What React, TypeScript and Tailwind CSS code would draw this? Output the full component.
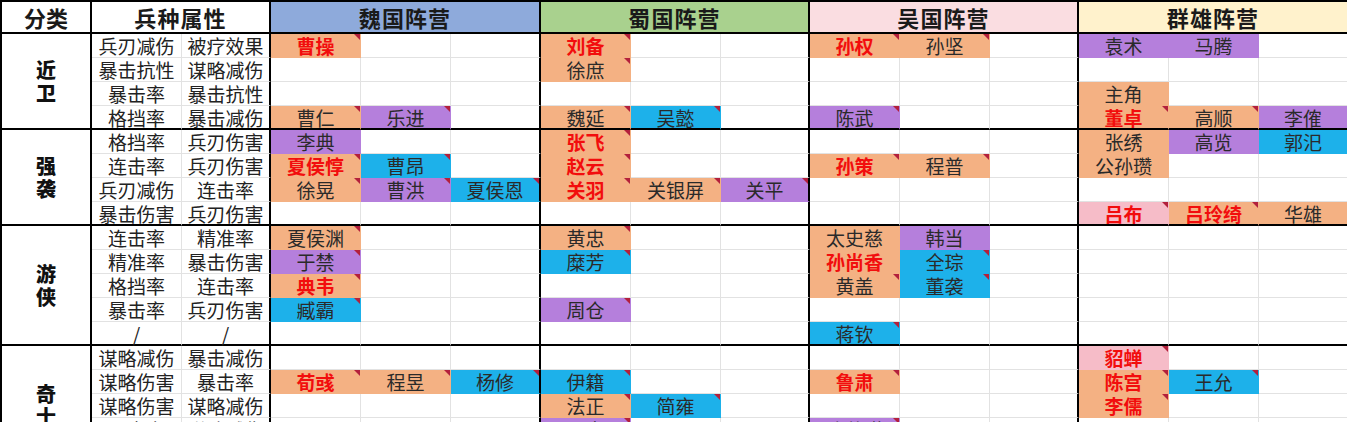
type Fill = 'o' | 'p' | 'b' | 'k'
type Hero = [string, Fill, boolean?, boolean?] | null

const fillClass: Record<Fill, string> = {
  o: 'bg-[#f4b183] border-[#f4b183]',
  p: 'bg-[#b57fdc] border-[#b57fdc]',
  b: 'bg-[#1db1ea] border-[#1db1ea]',
  k: 'bg-[#f6bcc8] border-[#f6bcc8]',
}

const camps = [
  { name: '魏国阵营', bg: 'bg-[#8eaadb]' },
  { name: '蜀国阵营', bg: 'bg-[#a9d18e]' },
  { name: '吴国阵营', bg: 'bg-[#fadde1]' },
  { name: '群雄阵营', bg: 'bg-[#fff2cc]' },
]

const groups = [
  { label: '近卫', rows: 4 },
  { label: '强袭', rows: 4 },
  { label: '游侠', rows: 5 },
  { label: '奇士', rows: 5 },
]

const attrs: [string, string][] = [
  ['兵刃减伤', '被疗效果'],
  ['暴击抗性', '谋略减伤'],
  ['暴击率', '暴击抗性'],
  ['格挡率', '暴击减伤'],
  ['格挡率', '兵刃伤害'],
  ['连击率', '兵刃伤害'],
  ['兵刃减伤', '连击率'],
  ['暴击伤害', '兵刃伤害'],
  ['连击率', '精准率'],
  ['精准率', '暴击伤害'],
  ['格挡率', '连击率'],
  ['暴击率', '兵刃伤害'],
  ['/', '/'],
  ['谋略减伤', '暴击减伤'],
  ['谋略伤害', '暴击率'],
  ['谋略伤害', '谋略减伤'],
  ['暴击率', '谋略减伤'],
  ['谋略伤害', '暴击伤害'],
]

const empty: Hero[] = [null, null, null]

// heroes[row][camp] = three cells
const heroes: Hero[][][] = [
  [
    [['曹操', 'o', true, true], null, null],
    [['刘备', 'o', true, true], null, null],
    [['孙权', 'o', true, true], ['孙坚', 'o', false, true], null],
    [['袁术', 'p'], ['马腾', 'p'], null],
  ],
  [empty, [['徐庶', 'o', false, true], null, null], empty, empty],
  [empty, empty, empty, [['主角', 'o'], null, null]],
  [
    [['曹仁', 'o', false, true], ['乐进', 'p', false, true], null],
    [['魏延', 'o', false, true], ['吴懿', 'b', false, true], null],
    [['陈武', 'p', false, true], null, null],
    [['董卓', 'o', true, true], ['高顺', 'o', false, true], ['李傕', 'p']],
  ],
  [
    [['李典', 'p'], null, null],
    [['张飞', 'o', true, true], null, null],
    empty,
    [['张绣', 'o'], ['高览', 'p'], ['郭汜', 'b']],
  ],
  [
    [['夏侯惇', 'o', true, true], ['曹昂', 'b', false, true], null],
    [['赵云', 'o', true, true], null, null],
    [['孙策', 'o', true, true], ['程普', 'o', false, true], null],
    [['公孙瓒', 'o'], null, null],
  ],
  [
    [['徐晃', 'o', false, true], ['曹洪', 'p', false, true], ['夏侯恩', 'b', false, true]],
    [['关羽', 'o', true, true], ['关银屏', 'o', false, true], ['关平', 'p', false, true]],
    empty,
    empty,
  ],
  [empty, empty, empty, [['吕布', 'k', true, true], ['吕玲绮', 'o', true, true], ['华雄', 'o']]],
  [
    [['夏侯渊', 'o', false, true], null, null],
    [['黄忠', 'o', false, true], null, null],
    [['太史慈', 'o'], ['韩当', 'p'], null],
    empty,
  ],
  [
    [['于禁', 'p', false, true], null, null],
    [['糜芳', 'b', false, true], null, null],
    [['孙尚香', 'o', true], ['全琮', 'b', false, true], null],
    empty,
  ],
  [
    [['典韦', 'o', true, true], null, null],
    empty,
    [['黄盖', 'o', false, true], ['董袭', 'b', false, true], null],
    empty,
  ],
  [[['臧霸', 'b', false, true], null, null], [['周仓', 'p', false, true], null, null], empty, empty],
  [empty, empty, [['蒋钦', 'b', false, true], null, null], empty],
  [empty, empty, empty, [['貂蝉', 'k', true, true], null, null]],
  [
    [['荀彧', 'o', true, true], ['程昱', 'o', false, true], ['杨修', 'b', false, true]],
    [['伊籍', 'b', false, true], null, null],
    [['鲁肃', 'o', true, true], null, null],
    [['陈宫', 'o', true, true], ['王允', 'b', false, true], null],
  ],
  [
    empty,
    [['法正', 'o', false, true], ['简雍', 'b', false, true], null],
    empty,
    [['李儒', 'o', true, true], null, null],
  ],
  [empty, [['马良', 'p', false, true], null, null], [['诸葛瑾', 'p', false, true], null, null], empty],
  [empty, empty, empty, empty],
]

const groupEnds = new Set([3, 7, 12, 17])

function HeroCell({ hero, last, endRow }: { hero: Hero; last: boolean; endRow: boolean }) {
  const right = last ? 'border-r-2 border-r-black' : 'border-r'
  const bottom = endRow ? 'border-b-2 border-b-black' : 'border-b'
  if (!hero) {
    return <div className={`border-[#e2e2e2] ${right} ${bottom}`} />
  }
  const [name, fill, red, mark] = hero
  return (
    <div className={`relative flex items-center justify-center ${fillClass[fill]} ${right} ${bottom}`}>
      <span className={red ? 'font-bold text-[#f20d0d]' : 'text-[#2a2a2a]'}>{name}</span>
      {mark && (
        <span className="absolute top-0 right-0 h-0 w-0 border-t-[6px] border-l-[6px] border-t-[#b3203c] border-l-transparent" />
      )}
    </div>
  )
}

export default function App() {
  return (
    <div className="h-[422px] w-[1347px] overflow-hidden bg-white">
      <div
        className="grid grid-cols-[90px_90px_89px_90px_90px_90px_90px_90px_89px_90px_90px_89px_90px_90px_90px] grid-rows-[32px_repeat(18,24px)] border-l-2 border-t-2 border-black text-[19px] leading-none"
        style={{ fontFamily: '"Noto Sans CJK SC", "Noto Sans", sans-serif' }}
      >
        <div className="flex items-center justify-center border-b-2 border-r-2 border-black text-[22px] font-bold text-[#1a1a1a]">
          分类
        </div>
        <div className="col-span-2 flex items-center justify-center border-b-2 border-r-2 border-black text-[22px] font-bold tracking-wider text-[#1a1a1a]">
          兵种属性
        </div>
        {camps.map((c) => (
          <div
            key={c.name}
            className={`col-span-3 flex items-center justify-center border-b-2 border-r-2 border-black text-[22px] font-bold tracking-wider text-[#1a1a1a] ${c.bg}`}
          >
            {c.name}
          </div>
        ))}

        {attrs.map((a, r) => {
          const endRow = groupEnds.has(r)
          const bottom = endRow ? 'border-b-2 border-b-black' : 'border-b border-b-[#e2e2e2]'
          const start = groups.findIndex((_, gi) => groups.slice(0, gi).reduce((s, g) => s + g.rows, 0) === r)
          const g = start >= 0 ? groups[start] : null
          return [
            g && (
              <div
                key={`g${r}`}
                className={`flex flex-col items-center justify-center border-b-2 border-r-2 border-black text-[20px] font-black leading-[23px] text-[#111] ${
                  g.rows === 4 ? 'row-span-4' : 'row-span-5'
                }`}
              >
                <span>{g.label[0]}</span>
                <span>{g.label[1]}</span>
              </div>
            ),
            <div key={`a${r}`} className={`flex items-center justify-center border-r border-r-[#e2e2e2] text-[#222] ${bottom}`}>
              {a[0]}
            </div>,
            <div key={`b${r}`} className={`flex items-center justify-center border-r-2 border-r-black text-[#222] ${bottom}`}>
              {a[1]}
            </div>,
            ...heroes[r].flatMap((camp, ci) =>
              camp.map((h, k) => <HeroCell key={`h${r}-${ci}-${k}`} hero={h} last={k === 2} endRow={endRow} />)
            ),
          ]
        })}
      </div>
    </div>
  )
}
